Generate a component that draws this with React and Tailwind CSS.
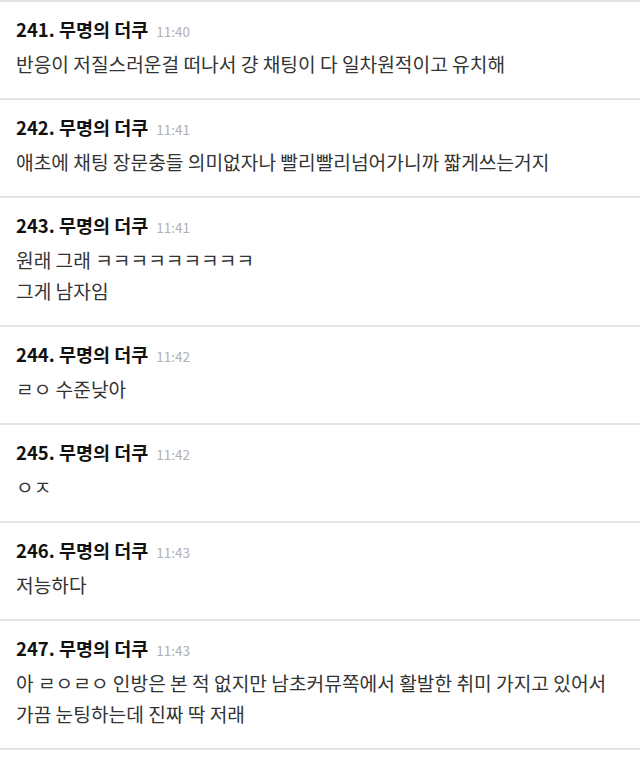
const items = [
  { n: 241, t: "11:40", lines: ["반응이 저질스러운걸 떠나서 걍 채팅이 다 일차원적이고 유치해"] },
  { n: 242, t: "11:41", lines: ["애초에 채팅 장문충들 의미없자나 빨리빨리넘어가니까 짧게쓰는거지"] },
  { n: 243, t: "11:41", lines: ["원래 그래 ㅋㅋㅋㅋㅋㅋㅋㅋㅋ", "그게 남자임"] },
  { n: 244, t: "11:42", lines: ["ㄹㅇ 수준낮아"] },
  { n: 245, t: "11:42", lines: ["ㅇㅈ"] },
  { n: 246, t: "11:43", lines: ["저능하다"] },
  { n: 247, t: "11:43", lines: ["아 ㄹㅇㄹㅇ 인방은 본 적 없지만 남초커뮤쪽에서 활발한 취미 가지고 있어서", "가끔 눈팅하는데 진짜 딱 저래"] },
];

export default function App() {
  return (
    <div
      className="w-[640px] h-[757px] bg-white overflow-hidden border-t-2 border-[#e4e4e4]"
      style={{ fontFamily: '"Noto Sans CJK KR", "Noto Sans", sans-serif' }}
    >
      {items.map((it) => (
        <div key={it.n} className="pl-4 pr-2 pt-[14px] pb-[19px] border-b-2 border-[#e4e4e4]">
          <div className="flex items-baseline h-[26px] leading-[26px]">
            <span className="text-[18.5px] font-bold text-[#111]">{it.n}. 무명의 더쿠</span>
            <span className="ml-[8px] text-[13.5px] text-[#b0b0b0]">{it.t}</span>
          </div>
          <div className="mt-[7px] text-[19.2px] leading-[30px] text-[#333] whitespace-nowrap">
            {it.lines.map((l, i) => (
              <div key={i} className={i > 0 ? "mt-px" : ""}>{l}</div>
            ))}
          </div>
        </div>
      ))}
    </div>
  );
}
